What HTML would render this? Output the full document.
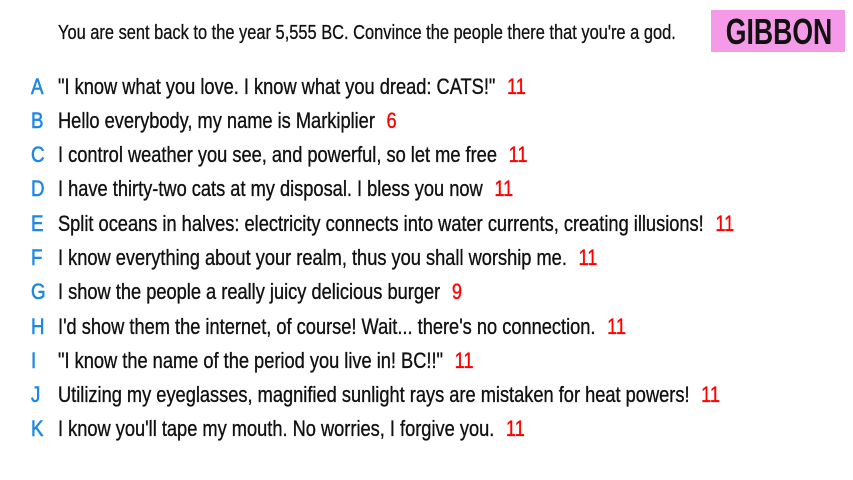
<!DOCTYPE html>
<html><head><meta charset="utf-8"><style>
html,body{margin:0;padding:0;background:#fff;}
body{width:853px;height:480px;position:relative;overflow:hidden;font-family:"Liberation Sans",sans-serif;color:#111;}
.h{position:absolute;left:58px;top:22px;font-size:20px;white-space:nowrap;transform:scaleX(0.821);transform-origin:0 50%;-webkit-text-stroke:0.3px #111;}
.g{position:absolute;left:711px;top:10px;width:134px;height:42px;background:#f59ae8;text-align:center;line-height:44px;color:#111;overflow:hidden;}
.g span{display:inline-block;font-size:36px;font-weight:bold;transform:scaleX(0.74);margin-left:-4px;}
.r{position:absolute;left:0;height:30px;font-size:22px;white-space:nowrap;line-height:30px;-webkit-text-stroke:0.35px currentColor;}
.l{position:absolute;left:31px;color:#1e88e5;transform:scaleX(0.85);transform-origin:0 50%;-webkit-text-stroke:0.6px #1e88e5;}
.t{position:absolute;left:58px;transform:scaleX(0.829);transform-origin:0 50%;}
.n{color:#f00;margin-left:14px;}
</style></head><body>
<div class="h">You are sent back to the year 5,555 BC. Convince the people there that you're a god.</div>
<div class="g"><span>GIBBON</span></div>
<div class="r" style="top:72px"><span class="l">A</span><span class="t">"I know what you love. I know what you dread: CATS!"<span class="n">11</span></span></div>
<div class="r" style="top:106px"><span class="l">B</span><span class="t">Hello everybody, my name is Markiplier<span class="n">6</span></span></div>
<div class="r" style="top:140px"><span class="l">C</span><span class="t">I control weather you see, and powerful, so let me free<span class="n">11</span></span></div>
<div class="r" style="top:174px"><span class="l">D</span><span class="t">I have thirty-two cats at my disposal. I bless you now<span class="n">11</span></span></div>
<div class="r" style="top:209px"><span class="l">E</span><span class="t">Split oceans in halves: electricity connects into water currents, creating illusions!<span class="n">11</span></span></div>
<div class="r" style="top:243px"><span class="l">F</span><span class="t">I know everything about your realm, thus you shall worship me.<span class="n">11</span></span></div>
<div class="r" style="top:277px"><span class="l">G</span><span class="t">I show the people a really juicy delicious burger<span class="n">9</span></span></div>
<div class="r" style="top:312px"><span class="l">H</span><span class="t">I'd show them the internet, of course! Wait... there's no connection.<span class="n">11</span></span></div>
<div class="r" style="top:346px"><span class="l">I</span><span class="t">"I know the name of the period you live in! BC!!"<span class="n">11</span></span></div>
<div class="r" style="top:380px"><span class="l">J</span><span class="t">Utilizing my eyeglasses, magnified sunlight rays are mistaken for heat powers!<span class="n">11</span></span></div>
<div class="r" style="top:414px"><span class="l">K</span><span class="t">I know you'll tape my mouth. No worries, I forgive you.<span class="n">11</span></span></div>
</body></html>
